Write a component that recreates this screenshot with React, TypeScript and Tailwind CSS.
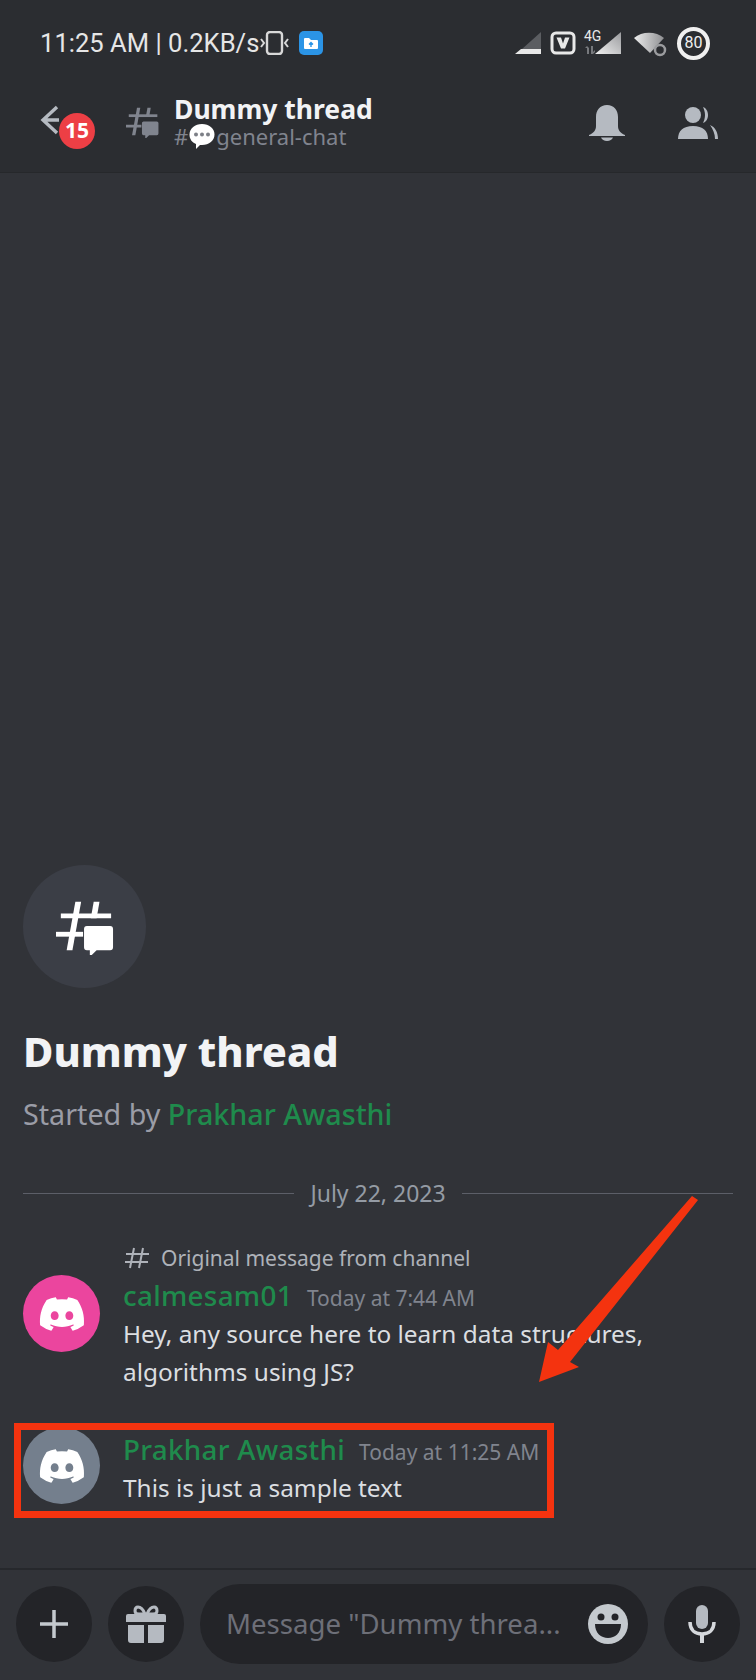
import React from 'react';
import { FaDiscord } from 'react-icons/fa';

// hash with a small chat bubble, used in the toolbar and the thread hero
const ThreadIcon = ({ className }: { className: string }) => (
  <svg viewBox="0 0 60 56" className={className} fill="currentColor">
    <path d="M20 2h6l-9 50h-6z" />
    <path d="M39 2h6l-3 17h-6z" />
    <path d="M5 14h52v5H5z" />
    <path d="M0 33h28v5H0z" />
    <path d="M32 27h24a3 3 0 0 1 3 3v19a3 3 0 0 1-3 3H42l-7 7v-7h-3a3 3 0 0 1-3-3V30a3 3 0 0 1 3-3z" />
  </svg>
);

const StatusIcons = () => (
  <div className="flex items-center">
    <svg viewBox="0 0 28 24" className="h-[24px] w-[28px]">
      <path d="M27 1v17H8z" fill="#5b5d61" />
      <path d="M7 18h20v5H1z" fill="#e8e8e8" />
    </svg>
    <svg viewBox="0 0 26 24" className="ml-[8px] h-[24px] w-[26px]">
      <rect x="2" y="2" width="22" height="20" rx="4" fill="none" stroke="#e8e8e8" strokeWidth="3" />
      <path d="M6.500 6.500h4.500l2 6 2-6h4.500l-4.500 11h-4z" fill="#e8e8e8" />
    </svg>
    <div className="relative ml-[8px] h-[24px] w-[38px]">
      <span className="absolute left-0 top-[-2px] font-['Roboto',sans-serif] text-[14px] leading-[14px] text-[#e8e8e8]">4G</span>
      <svg viewBox="0 0 38 24" className="h-[24px] w-[38px]">
        <path d="M1 17l2-2 2 2v6H3v-6zM7 15h2v6l2-2v2l-2 2H7z" fill="#77797d" />
        <defs>
          <linearGradient id="sig" x1="0" x2="1" y1="1" y2="0">
            <stop offset="0" stopColor="#f0f0f0" />
            <stop offset="1" stopColor="#9a9b9e" />
          </linearGradient>
        </defs>
        <path d="M37 1v22H11z" fill="url(#sig)" />
      </svg>
    </div>
    <svg viewBox="0 0 34 28" className="ml-[11px] h-[28px] w-[34px]">
      <defs>
        <linearGradient id="wifi" x1="0" x2="1" y1="0" y2="0">
          <stop offset="0" stopColor="#ececec" />
          <stop offset="1" stopColor="#8e8f92" />
        </linearGradient>
      </defs>
      <path d="M1 9c8-7 22-7 30 0L17 24z" fill="url(#wifi)" />
      <circle cx="27" cy="21" r="5" fill="#2b2d31" stroke="#9b9c9f" strokeWidth="2.5" />
    </svg>
    <div className="ml-[10px] flex h-[33px] w-[33px] items-center justify-center rounded-full border-[4px] border-[#f0f0f0] font-['Roboto',sans-serif] text-[16px] text-[#f0f0f0]">
      80
    </div>
  </div>
);

const Header = () => (
  <header className="h-[173px] shrink-0 border-b border-[#26282b] bg-[#2b2d31]">
    <div className="flex h-[84px] items-center justify-between pl-[40px] pr-[46px] pt-[2px]">
      <div className="flex items-center">
        <span className="font-['Roboto',sans-serif] text-[25.600px] text-[#e6e6e6]">11:25 AM | 0.2KB/s</span>
        <svg viewBox="0 0 32 24" className="h-[24px] w-[32px]" fill="none" stroke="#d8d8d8">
          <rect x="8" y="1" width="15" height="22" rx="3" strokeWidth="2.4" />
          <path d="M2 8l3 4-3 4M29 8l-3 4 3 4" strokeWidth="2" />
        </svg>
        <div className="ml-[8px] flex h-[24px] w-[24px] items-center justify-center rounded-[5px] bg-[#2b94e6]">
          <svg viewBox="0 0 16 16" className="h-[16px] w-[16px]">
            <path d="M1 4a1 1 0 0 1 1-1h4l2 2h6a1 1 0 0 1 1 1v7a1 1 0 0 1-1 1H2a1 1 0 0 1-1-1z" fill="#fff" />
            <path d="M8 12V8M6 9.500L8 7.500l2 2" fill="none" stroke="#2b94e6" strokeWidth="1.4" />
          </svg>
        </div>
      </div>
      <StatusIcons />
    </div>
    <div className="flex h-[88px] items-center pl-[40px] pr-[38px]">
      <div className="relative mt-[-14px] h-[32px] w-[86px]">
        <svg viewBox="0 0 20 30" className="h-[30px] w-[20px]" fill="none" stroke="#b5bac1" strokeWidth="3.4">
          <path d="M17 2L3 15l14 13M3 15h16" />
        </svg>
        <span className="absolute left-[19px] top-[8px] flex h-[36px] w-[36px] items-center justify-center rounded-full bg-[#ed3f45] text-[21px] font-bold text-white">
          15
        </span>
      </div>
      <ThreadIcon className="mt-[-12px] h-[32px] w-[33px] text-[#80848e]" />
      <div className="ml-[15px] mt-[-14px] flex flex-col">
        <span className="text-[26.500px] font-bold leading-[30px] text-[#f2f3f5]">Dummy thread</span>
        <div className="flex h-[24px] items-center text-[22px] leading-[24px] text-[#80848e]">
          <span>#</span>
          <svg viewBox="0 0 26 26" className="mx-[1px] h-[26px] w-[26px]">
            <path d="M13 1c7 0 12.500 4.500 12.500 10.500S20 22 13 22l-2 0-4 4 0-5C3 19.500.5 16 .5 11.500.5 5.500 6 1 13 1z" fill="#fff" />
            <circle cx="7" cy="11.500" r="2" fill="#7d8087" />
            <circle cx="13" cy="11.500" r="2" fill="#7d8087" />
            <circle cx="19" cy="11.500" r="2" fill="#7d8087" />
          </svg>
          <span>general-chat</span>
        </div>
      </div>
      <div className="ml-auto mt-[-10px] flex items-center gap-[53px]">
        <svg viewBox="0 0 36 36" className="h-[36px] w-[36px]" fill="#b5bac1">
          <path d="M18 0c7 0 11 5 11 12v9c0 4 2 7 7 9v1H0v-1c5-2 7-5 7-9v-9C7 5 11 0 18 0z" />
          <path d="M12 32.500h12c-1 2-3 3.500-6 3.500s-5-1.500-6-3.500z" />
        </svg>
        <svg viewBox="0 0 40 32" className="h-[32px] w-[40px]" fill="#b5bac1">
          <circle cx="15" cy="8" r="8" />
          <path d="M0 32c0-8 5-13 15-13s15 5 15 13z" />
          <path d="M25 0c3 1 5 4 5 8s-2 7-5 8c1-2 2-5 2-8s-1-6-2-8z" />
          <path d="M32 18c5 2 8 7 8 14h-3c0-5-2-10-5-14z" />
        </svg>
      </div>
    </div>
  </header>
);

const Message = ({
  avatarClass,
  name,
  time,
  children
}: {
  avatarClass: string;
  name: string;
  time: string;
  children: React.ReactNode;
}) => (
  <div className="flex gap-[23px]">
    <div className={`flex h-[77px] w-[77px] shrink-0 items-center justify-center rounded-full text-white ${avatarClass}`}>
      <FaDiscord size={48} />
    </div>
    <div className="flex min-w-0 flex-col pt-[5px]">
      <div className="flex items-baseline gap-[14px]">
        <span className="text-[27.800px] font-medium leading-[34px] tracking-[0.3px] text-[#1f8b4c]">{name}</span>
        <span className="text-[21px] leading-[34px] text-[#80848e]">{time}</span>
      </div>
      <div className="text-[24.400px] leading-[38px] text-[#dbdee1]">{children}</div>
    </div>
  </div>
);

const Composer = () => (
  <footer className="flex h-[112px] shrink-0 items-center gap-[16px] border-t-2 border-[#26282c] bg-[#313338] px-[16px] pb-[2px]">
    <button type="button" className="flex h-[76px] w-[76px] shrink-0 items-center justify-center rounded-full bg-[#232428]">
      <svg viewBox="0 0 28 28" className="h-[28px] w-[28px]" stroke="#c4c9ce" strokeWidth="3.5">
        <path d="M14 0v28M0 14h28" />
      </svg>
    </button>
    <button type="button" className="flex h-[76px] w-[76px] shrink-0 items-center justify-center rounded-full bg-[#232428]">
      <svg viewBox="0 0 40 38" className="h-[38px] w-[40px]" fill="#b5bac1">
        <path d="M0 11a2 2 0 0 1 2-2h36a2 2 0 0 1 2 2v6H0z" />
        <path d="M2 20h16v18H5a3 3 0 0 1-3-3zM22 20h16v15a3 3 0 0 1-3 3H22z" />
        <path d="M19 9c-2-5-4-7-7-7-2 0-3 2-3 4s2 3 4 3zM21 9c2-5 4-7 7-7 2 0 3 2 3 4s-2 3-4 3z" fill="none" stroke="#b5bac1" strokeWidth="3" />
      </svg>
    </button>
    <div className="flex h-[80px] min-w-0 flex-1 items-center rounded-full bg-[#232428] pl-[26px] pr-[20px]">
      <span className="flex-1 truncate text-[27.600px] text-[#6d6f78]">Message "Dummy threa...</span>
      <svg viewBox="0 0 40 40" className="h-[40px] w-[40px] shrink-0">
        <circle cx="20" cy="20" r="20" fill="#c4c9ce" />
        <circle cx="13" cy="13" r="3.500" fill="#232428" />
        <circle cx="27" cy="13" r="3.500" fill="#232428" />
        <path d="M7 20h26c0 9-6 14-13 14S7 29 7 20z" fill="#232428" />
      </svg>
    </div>
    <button type="button" className="flex h-[76px] w-[76px] shrink-0 items-center justify-center rounded-full bg-[#232428]">
      <svg viewBox="0 0 28 38" className="h-[38px] w-[28px]">
        <rect x="8" y="0" width="12" height="24" rx="6" fill="#b5bac1" />
        <path d="M2 17c0 8 5 12 12 12s12-4 12-12" fill="none" stroke="#d5d8dc" strokeWidth="3.500" />
        <path d="M12 29h4v9h-4z" fill="#d5d8dc" />
      </svg>
    </button>
  </footer>
);

export default function App() {
  return (
    <div className="relative flex h-[1680px] w-[756px] flex-col overflow-hidden bg-[#313338] font-['Noto_Sans',sans-serif]">
      <Header />

      <main className="flex flex-1 flex-col justify-end px-[23px] pb-[61px]">
        <div className="flex h-[123px] w-[123px] items-center justify-center rounded-full bg-[#3b3e46] text-white">
          <ThreadIcon className="h-[56px] w-[58px]" />
        </div>
        <h1 className="mt-[35px] text-[41.500px] font-extrabold leading-[56px] text-[#f2f3f5]">Dummy thread</h1>
        <p className="mt-[15px] text-[28.700px] leading-[40px] text-[#9a9ca6]">
          Started by <span className="font-medium text-[#1f8b4c]">Prakhar Awasthi</span>
        </p>

        <div className="mt-[44px] flex items-center gap-[16px]">
          <div className="h-px flex-1 bg-[#5c5f68]" />
          <span className="text-[23px] leading-[30px] text-[#949ba4]">July 22, 2023</span>
          <div className="h-px flex-1 bg-[#5c5f68]" />
        </div>

        <div className="mt-[35px] flex items-center gap-[12px] pl-[102px]">
          <svg viewBox="0 0 24 22" className="h-[22px] w-[24px]" fill="none" stroke="#aeb2b9" strokeWidth="2">
            <path d="M9 1L5 21M18 1l-4 20M1 7h23M0 15h23" />
          </svg>
          <span className="text-[21px] leading-[30px] text-[#aeb2b9]">Original message from channel</span>
        </div>
        <Message avatarClass="mt-[2px] bg-[#eb459e]" name="calmesam01" time="Today at 7:44 AM">
          Hey, any source here to learn data structures,
          <br />
          algorithms using JS?
        </Message>

        <div className="mt-[36px]">
          <Message avatarClass="bg-[#747f8d]" name="Prakhar Awasthi" time="Today at 11:25 AM">
            This is just a sample text
          </Message>
        </div>
      </main>

      <Composer />

      {/* red annotation drawn over the screenshot */}
      <div className="absolute left-[14px] top-[1423px] h-[95px] w-[540px] border-[7px] border-[#f4330f]" />
      <svg viewBox="0 0 756 1680" className="pointer-events-none absolute inset-0 h-[1680px] w-[756px]">
        <path d="M692 1196l6 4-128 162 9 5-40 15 9-40 10 8z" fill="#f4330f" />
      </svg>
    </div>
  );
}
